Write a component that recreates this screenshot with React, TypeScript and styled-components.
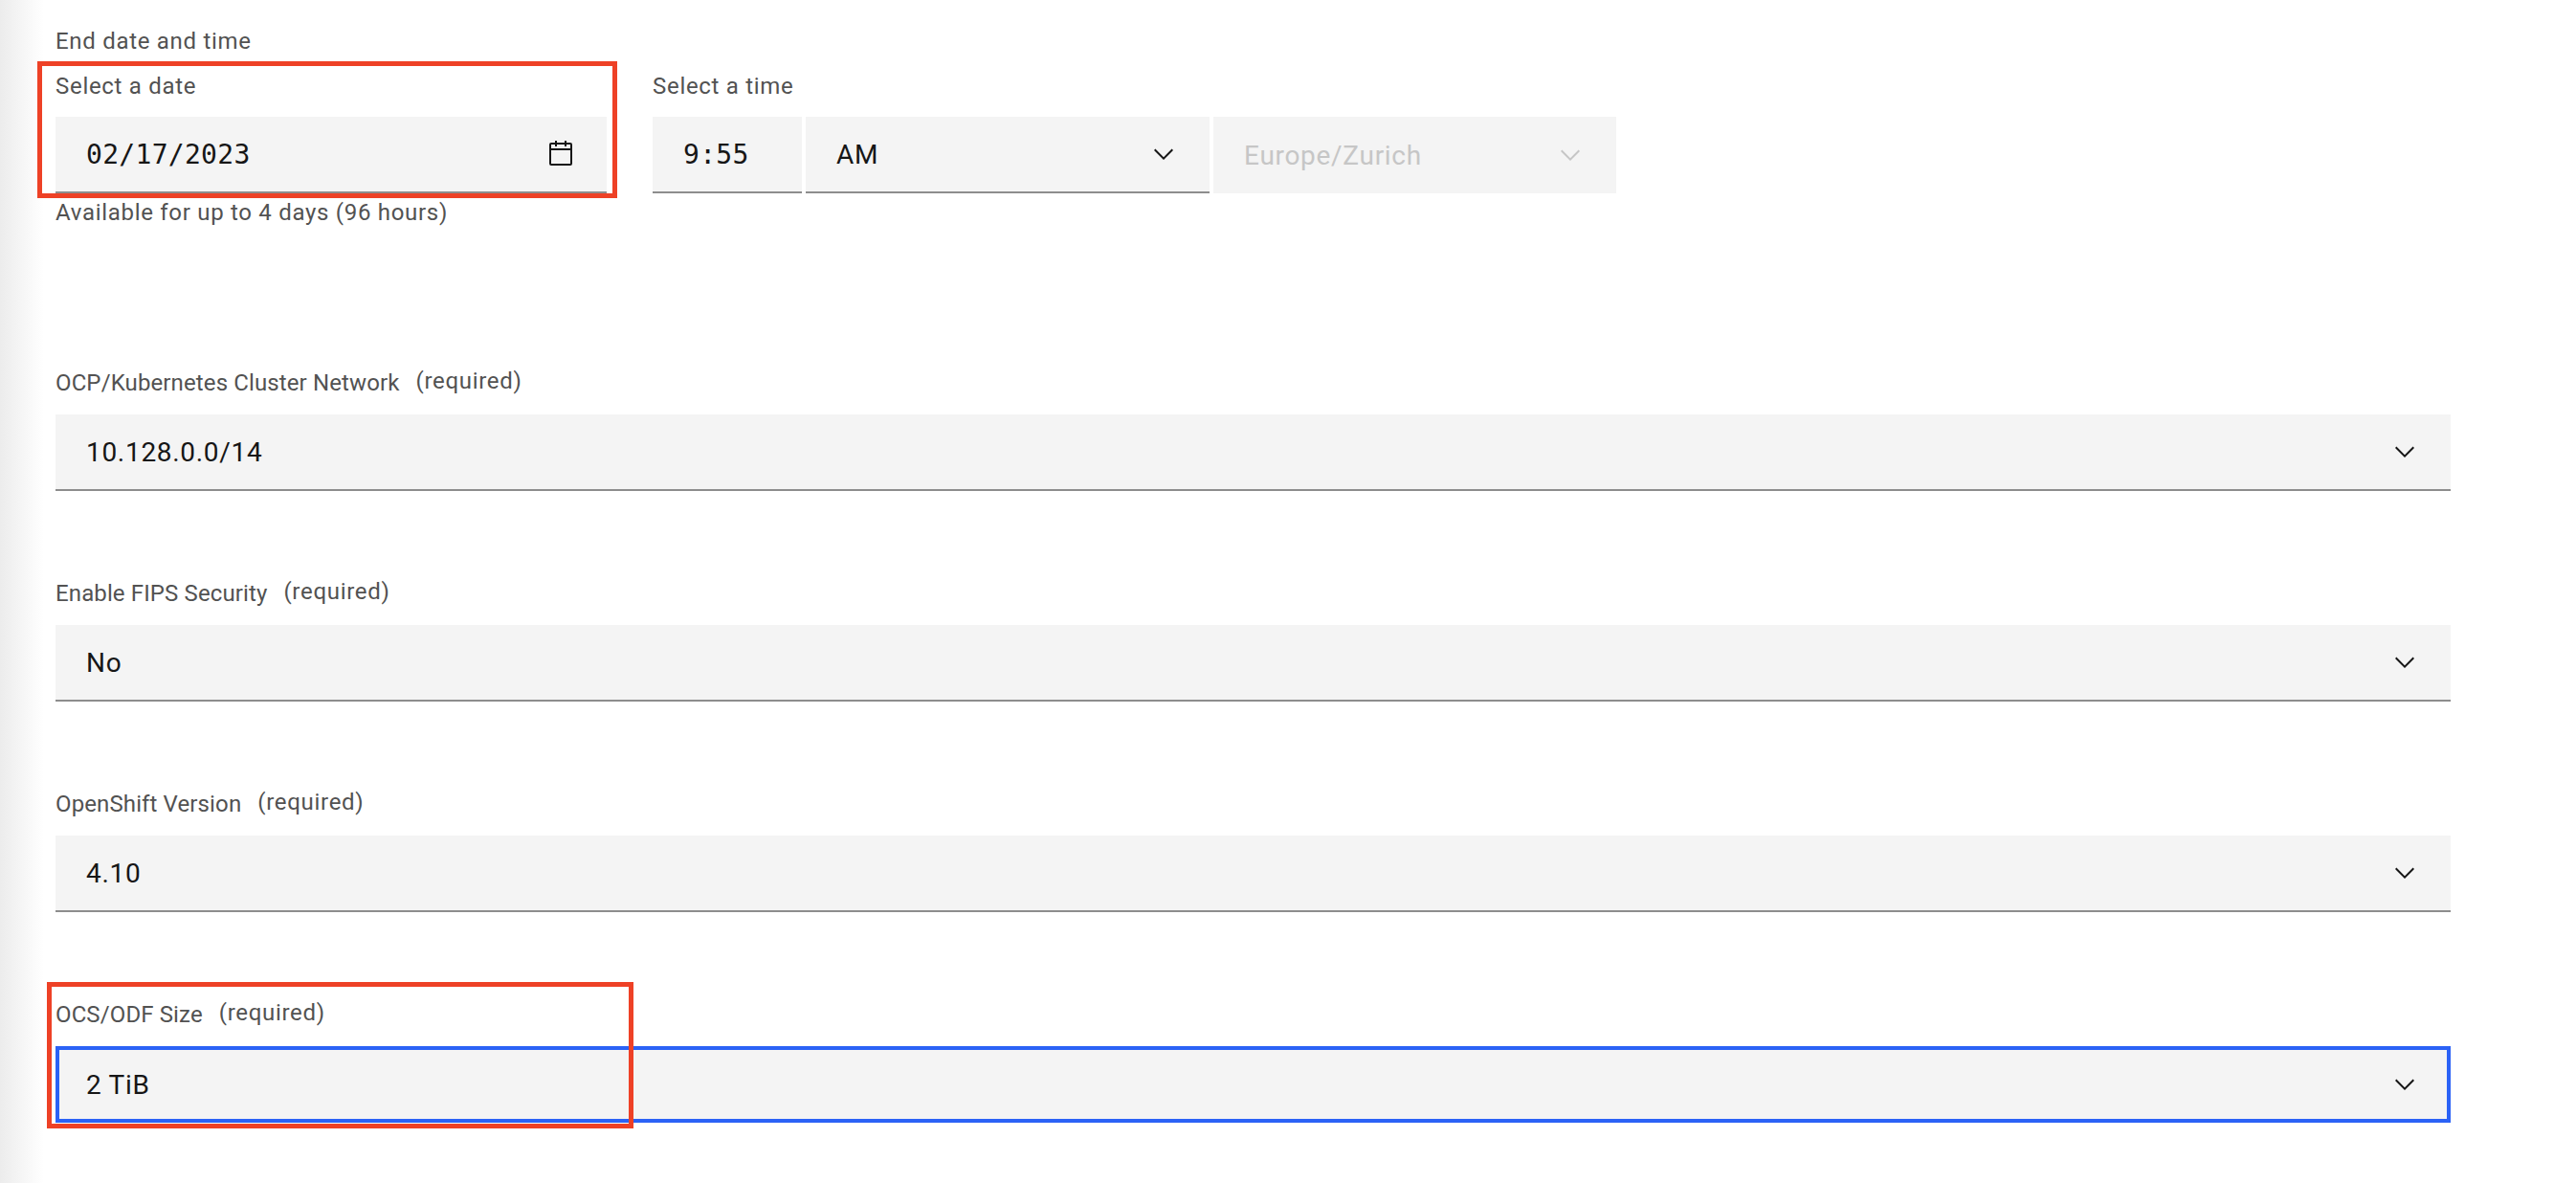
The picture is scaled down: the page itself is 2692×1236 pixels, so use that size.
import styled, { createGlobalStyle } from "styled-components";

const GlobalStyle = createGlobalStyle`
  html, body {
    margin: 0;
    padding: 0;
  }
  body {
    height: 1236px;
    overflow: hidden;
    font-family: "Roboto", "Liberation Sans", sans-serif;
    background: linear-gradient(to right, #ececec 0, #f6f6f6 24px, #ffffff 46px);
  }
`;

const Form = styled.div`
  width: 2503px;
  padding: 27px 0 0 58px;
`;

const GroupTitle = styled.div`
  font-size: 24px;
  line-height: 32px;
  letter-spacing: 0.7px;
  color: #525252;
  margin-bottom: 15px;
`;

const DateRow = styled.div`
  display: flex;
  gap: 48px;
`;

const DateField = styled.div`
  position: relative;
  width: 576px;
`;

const TimeField = styled.div`
  display: flex;
  flex-direction: column;
`;

const TimeControls = styled.div`
  display: flex;
  gap: 4px;
`;

const Label = styled.div`
  font-size: 24px;
  line-height: 32px;
  letter-spacing: 0.7px;
  color: #525252;
  margin-bottom: 16px;
`;

const Helper = styled.div`
  margin-top: 4px;
  font-size: 24px;
  line-height: 32px;
  letter-spacing: 0.7px;
  color: #525252;
`;

const Control = styled.div<{ $width?: number; $disabled?: boolean; $focused?: boolean }>`
  box-sizing: border-box;
  display: flex;
  align-items: center;
  justify-content: space-between;
  width: ${(p) => (p.$width ? `${p.$width}px` : "100%")};
  height: 80px;
  padding: 0 32px;
  background: #f4f4f4;
  font-size: 28px;
  letter-spacing: 0.7px;
  color: ${(p) => (p.$disabled ? "#c6c6c6" : "#161616")};
  border-bottom: ${(p) => (p.$disabled ? "0" : "2px solid #8d8d8d")};

  ${(p) =>
    p.$focused &&
    `
    border: 4px solid #2b62f6;
    padding: 0 28px;
  `}
`;

const MonoValue = styled.span`
  font-family: "DejaVu Sans Mono", "Liberation Mono", monospace;
  font-size: 28px;
  letter-spacing: 0.3px;
`;

const Fields = styled.div`
  display: flex;
  flex-direction: column;
  gap: 91px;
  margin-top: 146px;
`;

const Field = styled.div`
  position: relative;
`;

const FieldLabel = styled.div`
  display: flex;
  align-items: center;
  gap: 17px;
  height: 32px;
  margin-bottom: 17px;
  font-size: 24px;
  letter-spacing: 0.12px;
  color: #525252;
`;

const Required = styled.span`
  margin-bottom: 4px;
  letter-spacing: 0.7px;
`;

const Annotation = styled.div<{ $left: number; $top: number; $w: number; $h: number }>`
  position: absolute;
  box-sizing: border-box;
  left: ${(p) => p.$left}px;
  top: ${(p) => p.$top}px;
  width: ${(p) => p.$w}px;
  height: ${(p) => p.$h}px;
  border: 5px solid #ee4126;
  pointer-events: none;
`;

const IconSvg = styled.svg`
  flex: none;
  width: 32px;
  height: 32px;
  fill: currentColor;
`;

const ChevronDown = () => (
  <IconSvg viewBox="0 0 16 16">
    <path d="M8 11L3 6l.7-.7L8 9.6l4.3-4.3.7.7z" />
  </IconSvg>
);

const CalendarIcon = () => (
  <IconSvg viewBox="0 0 16 16">
    <path d="M13 2h-2V1h-1v1H6V1H5v1H3a1 1 0 0 0-1 1v10a1 1 0 0 0 1 1h10a1 1 0 0 0 1-1V3a1 1 0 0 0-1-1zm0 11H3V6h10zm0-8H3V3h2v1h1V3h4v1h1V3h2z" />
  </IconSvg>
);

const fields = [
  { label: "OCP/Kubernetes Cluster Network", value: "10.128.0.0/14" },
  { label: "Enable FIPS Security", value: "No" },
  { label: "OpenShift Version", value: "4.10" },
  { label: "OCS/ODF Size", value: "2 TiB", focused: true },
];

export default function App() {
  return (
    <>
      <GlobalStyle />
      <Form>
        <GroupTitle>End date and time</GroupTitle>
        <DateRow>
          <DateField>
            <Label>Select a date</Label>
            <Control>
              <MonoValue>02/17/2023</MonoValue>
              <CalendarIcon />
            </Control>
            <Helper>Available for up to 4 days (96 hours)</Helper>
            <Annotation $left={-19} $top={-10} $w={606} $h={143} />
          </DateField>
          <TimeField>
            <Label>Select a time</Label>
            <TimeControls>
              <Control $width={156}>
                <MonoValue>9:55</MonoValue>
              </Control>
              <Control $width={422}>
                AM
                <ChevronDown />
              </Control>
              <Control $width={421} $disabled>
                Europe/Zurich
                <ChevronDown />
              </Control>
            </TimeControls>
          </TimeField>
        </DateRow>
        <Fields>
          {fields.map((f) => (
            <Field key={f.label}>
              <FieldLabel>
                {f.label}
                <Required>(required)</Required>
              </FieldLabel>
              <Control $focused={f.focused}>
                {f.value}
                <ChevronDown />
              </Control>
              {f.focused && <Annotation $left={-9} $top={-18} $w={613} $h={153} />}
            </Field>
          ))}
        </Fields>
      </Form>
    </>
  );
}
